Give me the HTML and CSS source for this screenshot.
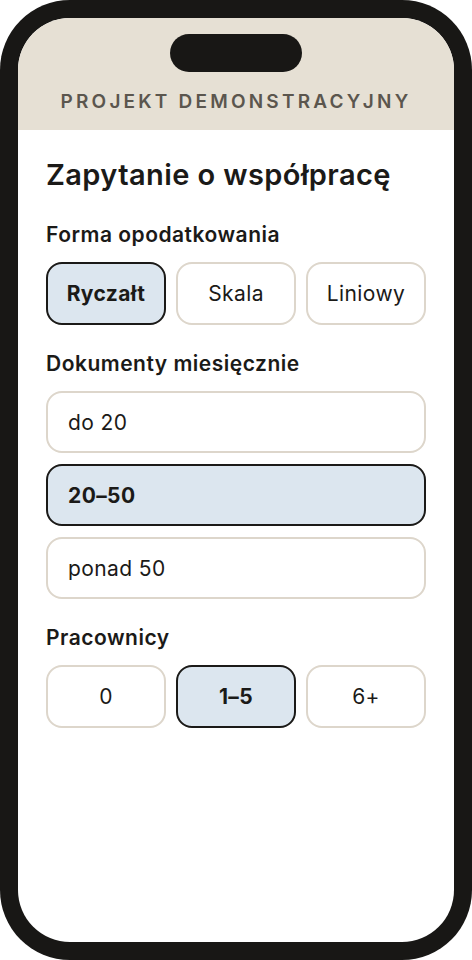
FILE: index.html
```html
<!DOCTYPE html>
<html lang="pl">
<head>
    <meta charset="UTF-8">
    <meta name="viewport" content="width=device-width, initial-scale=1.0">
    <title>Zapytanie o współpracę</title>
    <link rel="stylesheet" href="styles.css">
</head>
<body>
    <div class="phone">
        <div class="screen">
            <!-- Top bar with camera cutout -->
            <div class="topbar">
                <div class="island"></div>
                <div class="project-name">Projekt demonstracyjny</div>
            </div>

            <div class="content">
                <h1>Zapytanie o współpracę</h1>

                <div class="group">
                    <h2>Forma opodatkowania</h2>
                    <div class="choices">
                        <button class="choice active">Ryczałt</button>
                        <button class="choice">Skala</button>
                        <button class="choice">Liniowy</button>
                    </div>
                </div>

                <div class="group">
                    <h2>Dokumenty miesięcznie</h2>
                    <div class="list">
                        <button class="choice wide">do 20</button>
                        <button class="choice wide active">20–50</button>
                        <button class="choice wide">ponad 50</button>
                    </div>
                </div>

                <div class="group">
                    <h2>Pracownicy</h2>
                    <div class="choices">
                        <button class="choice">0</button>
                        <button class="choice active">1–5</button>
                        <button class="choice">6+</button>
                    </div>
                </div>
            </div>
        </div>
    </div>

    <script>
        // only one option per group can be picked
        document.querySelectorAll('.group').forEach(function(group) {
            group.querySelectorAll('.choice').forEach(function(btn) {
                btn.addEventListener('click', function() {
                    group.querySelectorAll('.choice').forEach(function(b) {
                        b.classList.remove('active');
                    });
                    btn.classList.add('active');
                });
            });
        });
    </script>
</body>
</html>
```

FILE: styles.css
```css
/* Page and phone frame */
body {
    margin: 0;
    background: #ffffff;
    font-family: 'Inter', 'Noto Sans', sans-serif;
    color: #1b1a18;
}

.phone {
    width: 472px;
    height: 960px;
    box-sizing: border-box;
    padding: 18px;
    background: #181715;
    border-radius: 70px;
}

.screen {
    height: 100%;
    background: #ffffff;
    border-radius: 52px;
    overflow: hidden;
}

/* Header strip */
.topbar {
    height: 112px;
    box-sizing: border-box;
    padding-top: 16px;
    background: #e6e0d4;
    display: flex;
    flex-direction: column;
    align-items: center;
}

.island {
    width: 132px;
    height: 38px;
    border-radius: 19px;
    background: #181715;
}

.project-name {
    margin-top: 18px;
    font-size: 19px;
    line-height: 24px;
    font-weight: 600;
    letter-spacing: 3.2px;
    text-transform: uppercase;
    color: #5b564e;
}

/* Form */
.content {
    padding: 28px 28px 0;
}

h1 {
    margin: 0;
    font-size: 29px;
    line-height: 34px;
    font-weight: 600;
    letter-spacing: 0.4px;
}

.group {
    margin-top: 26px;
}

h1 + .group {
    margin-top: 30px;
}

h2 {
    margin: 0 0 14px;
    font-size: 21px;
    line-height: 26px;
    font-weight: 600;
    letter-spacing: 0.5px;
}

.choices {
    display: grid;
    grid-template-columns: repeat(3, 1fr);
    gap: 10px;
}

.list {
    display: flex;
    flex-direction: column;
    gap: 11px;
}

.choice {
    height: 63px;
    border: 2px solid #ddd6cb;
    border-radius: 16px;
    background: #ffffff;
    font-family: inherit;
    font-size: 21px;
    font-weight: 400;
    letter-spacing: 0.4px;
    color: #1b1a18;
    cursor: pointer;
}

.choice.wide {
    height: 62px;
    text-align: left;
    padding: 0 20px;
}

.choice.active {
    background: #dce6ef;
    border-color: #1b1a18;
    font-weight: 700;
}
```
